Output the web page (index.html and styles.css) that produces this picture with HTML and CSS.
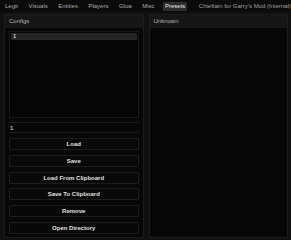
FILE: index.html
```html
<!DOCTYPE html>
<html lang="en">
<head>
    <meta charset="UTF-8">
    <title>Presets</title>
    <link rel="stylesheet" href="styles.css">
</head>
<body>
    <div class="tabs">
        <span class="tab">Legit</span>
        <span class="tab">Visuals</span>
        <span class="tab">Entities</span>
        <span class="tab">Players</span>
        <span class="tab">Glua</span>
        <span class="tab">Misc</span>
        <span class="tab active">Presets</span>
        <span class="tab title">Chieftain for Garry's Mod (Internal)</span>
    </div>

    <div class="panels">
        <div class="panel">
            <div class="panel-head">Configs</div>
            <div class="panel-body">
                <div class="listbox">
                    <div class="item selected">1</div>
                </div>
                <div class="input">1</div>
                <div class="btn">Load</div>
                <div class="btn">Save</div>
                <div class="btn">Load From Clipboard</div>
                <div class="btn">Save To Clipboard</div>
                <div class="btn">Remove</div>
                <div class="btn">Open Directory</div>
            </div>
        </div>
        <div class="panel">
            <div class="panel-head">Unknown</div>
            <div class="panel-body"></div>
        </div>
    </div>
</body>
</html>
```

FILE: styles.css
```css
* {
    box-sizing: border-box;
    margin: 0;
    padding: 0;
}

body {
    width: 291px;
    height: 240px;
    background: #101010;
    font-family: 'Liberation Sans', Arial, sans-serif;
    font-size: 6px;
    color: #cfcfcf;
    overflow: hidden;
}

.tabs {
    display: flex;
    gap: 6.5px;
    height: 12px;
    align-items: center;
    padding-left: 3px;
    background: #0b0b0b;
}

.tab {
    padding: 1px 2px;
    line-height: 7px;
    color: #a8a8a8;
    white-space: nowrap;
}

.tab.active {
    background: #2c2c2c;
    color: #e6e6e6;
    border-radius: 1px;
}

.tab.title {
    margin-left: 3px;
    color: #a0a0a0;
}

.panels {
    display: flex;
    gap: 5px;
    padding: 2px 3px 2px 4px;
    height: 228px;
}

.panel {
    flex: 1;
    display: flex;
    flex-direction: column;
    background: #070707;
    border: 1px solid #1c1c1c;
}

.panel-head {
    height: 13px;
    line-height: 13px;
    padding-left: 4px;
    background: #161616;
    color: #b5b5b5;
}

.panel-body {
    flex: 1;
    padding: 3px 4px;
    display: flex;
    flex-direction: column;
}

.listbox {
    height: 87px;
    border: 1px solid #1a1a1a;
    background: #050505;
    padding: 1px;
}

.item {
    height: 7px;
    line-height: 7px;
    padding-left: 2px;
    color: #e8e8e8;
}

.item.selected {
    background: #262626;
}

.input {
    margin-top: 4px;
    height: 11px;
    line-height: 10px;
    padding-left: 1px;
    border-top: 1px solid #1c1c1c;
    border-bottom: 1px solid #1c1c1c;
    color: #e8e8e8;
}

.btn {
    margin-top: 5px;
    height: 12px;
    line-height: 10px;
    text-align: center;
    font-weight: bold;
    color: #e0e0e0;
    border: 1px solid #1d1d1d;
    background: #080808;
    border-radius: 1px;
}

.btn + .btn {
    margin-top: 4.8px;
}
```
